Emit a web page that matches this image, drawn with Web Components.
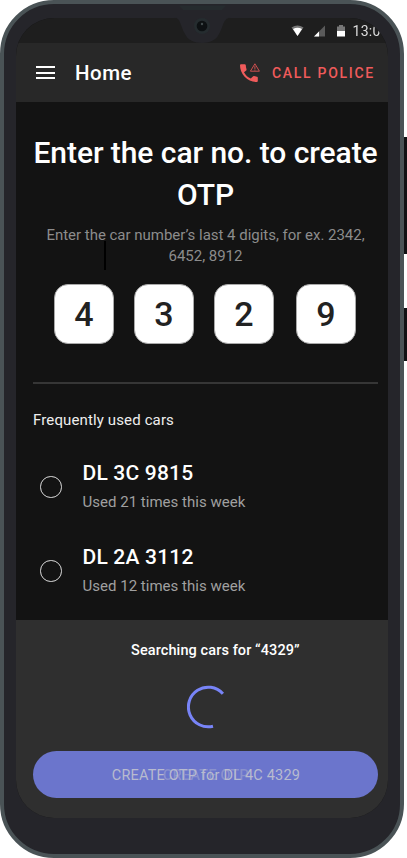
<!DOCTYPE html>
<html lang="en">
<head>
<meta charset="utf-8">
<title>Home</title>
<style>
html,body{margin:0;background:#fff;overflow:hidden}
body{width:407px;height:858px;font-family:Roboto,"Liberation Sans",sans-serif;color:#fff}
</style>
</head>
<body>
<phone-frame>
  <status-bar slot="status">13:00</status-bar>
  <app-bar>Home<span slot="action">CALL POLICE</span></app-bar>
  <otp-form>
    <span slot="title">Enter the car no. to create OTP</span>
    <span slot="hint">Enter the car number’s last 4 digits, for ex. 2342, 6452, 8912</span>
    <digit-box>4</digit-box><digit-box>3</digit-box><digit-box>2</digit-box><digit-box style="margin-left:2px">9</digit-box>
  </otp-form>
  <car-list>
    <span slot="heading">Frequently used cars</span>
    <car-option>DL 3C 9815<span slot="usage">Used 21 times this week</span></car-option>
    <car-option>DL 2A 3112<span slot="usage">Used 12 times this week</span></car-option>
  </car-list>
  <search-sheet>Searching cars for “4329”
    <create-button slot="button">CREATE OTP for DL 4C 4329<span slot="ghost">CREATE OTP</span></create-button>
  </search-sheet>
</phone-frame>
<script>
function define(name, css, html) {
  const t = document.createElement('template');
  t.innerHTML = `<style>:host,*{box-sizing:border-box}${css}</style>${html}`;
  customElements.define(name, class extends HTMLElement {
    constructor() {
      super();
      this.attachShadow({mode: 'open'}).append(t.content.cloneNode(true));
    }
  });
}

define('phone-frame', `
:host{display:block;position:relative;width:407px;height:858px}
.key{position:absolute;left:400px;width:7px;background:#111214}
.body{position:relative;width:404px;height:858px}
.case{width:404px;height:858px;border:4px solid #4a5356;border-radius:54px;background:#25252a;padding:14px 12px 36px}
.screen{width:372px;height:800px;border-radius:38px;overflow:hidden;background:#131313;display:flex;flex-direction:column}
.notch{position:absolute;left:0;top:0}
`, `
<div class="key" style="top:137px;height:117px"></div>
<div class="key" style="top:308px;height:53px"></div>
<div class="body"><div class="case"><div class="screen"><slot name="status"></slot><slot></slot></div></div>
<svg class="notch" width="404" height="50" viewBox="0 0 404 50">
<path d="M174 17C181 18 180 26 185 34C190 46 214 46 219 34C224 26 222 19 231 17Z" fill="#25252a"/>
<path d="M179 5.500H226L222 10H183Z" fill="#252b2e"/>
<circle cx="202" cy="26" r="8" fill="#252c2f"/><circle cx="202" cy="26" r="5.300" fill="#0d1113"/><circle cx="202" cy="24" r="1.200" fill="#424b4d"/>
</svg></div>`);

define('status-bar', `
:host{display:flex;height:25px;flex:none;background:#1e1e1e;color:#ddd;font-size:14px;line-height:26px;justify-content:flex-end;white-space:nowrap}
.clip{width:35.500px;overflow:hidden;letter-spacing:.3px;-webkit-mask-image:linear-gradient(90deg,#000 78%,transparent 96%)}
svg{display:block;flex:none;margin-right:8px}
`, `
<svg width="54" height="25" viewBox="0 0 54 25">
<path d="M.5 9.500Q6.500 5.500 12.500 9.500L6.500 18Z" fill="#777"/><path d="M2 11Q6.500 8.500 11 11L6.500 18Z" fill="#fff"/>
<path d="M23 18.500H34V7.500Z" fill="#5b5b5b"/><path d="M23 18.500H28V13.500Z" fill="#fff"/>
<path d="M46 8.500H48V7H52V8.500H54V13H46Z" fill="#777"/><path d="M46 13H54V18.500H46Z" fill="#fff"/>
</svg><div class="clip"><slot></slot></div>`);

define('app-bar', `
:host{display:flex;flex:none;align-items:center;height:59px;background:#282828;padding:0 13px 0 20px;font-size:20.500px;font-weight:500;letter-spacing:.5px}
.menu{width:19px;height:13px;display:flex;flex-direction:column;justify-content:space-between;margin-right:20px}
.menu i{height:2px;background:#fff}
.action{display:flex;align-items:center;margin-left:auto;color:#f05b5b;font-size:14px;letter-spacing:1.720px}
svg{margin-right:11px;display:block}
`, `
<div class="menu"><i></i><i></i><i></i></div><slot></slot>
<div class="action"><svg width="21" height="20" viewBox="0 0 21 20"><path d="M0 2.300Q0 1.300 1 1.300H4.700Q5.700 1.300 5.800 2.300Q5.900 4.400 6.500 6.300Q6.700 7 6.200 7.500L4 9.300Q6.500 14 10.800 15.600L12.900 13.400Q13.400 12.900 14.100 13.100L17 13.700Q17.800 13.900 17.800 14.700V18Q17.800 19 16.700 19Q9.500 18.700 4.600 13.700Q0 8.800 0 2.300Z" fill="#f05b5b"/><path d="M14.900.8L19.400 8.200H10.400Z" fill="none" stroke="#cf5050" stroke-width="1"/><path d="M14.900 3.200V5.900M14.900 6.500V7.500" stroke="#cf5050" stroke-width="1"/></svg><slot name="action"></slot></div>`);

define('otp-form', `
:host{display:block;flex:none;height:282px;margin:0 10px 0 17px;border-bottom:2px solid #363636;text-align:center;position:relative}
h1{margin:0 -20px;padding-top:30px;font-size:30px;line-height:42px;font-weight:500;letter-spacing:-.06px}
h1 slot{display:block;width:370px;margin:auto}
p{margin:9px auto 0;width:335px;font-size:15px;line-height:21px;color:#8c8c8c;letter-spacing:-.02px}
.boxes{display:flex;gap:20px;justify-content:center;margin:17px 1px 0 0}
.caret{position:absolute;left:71px;top:139px;width:2px;height:29px;background:#000}
`, `<h1><slot name="title"></slot></h1><p><slot name="hint"></slot></p><div class="boxes"><slot></slot></div><i class="caret"></i>`);

define('digit-box', `
:host{display:flex;width:60px;height:60px;background:#fff;border:1px solid #a9a9a9;border-radius:14px;align-items:center;justify-content:center;color:#222;font-size:34px;font-weight:500;padding-bottom:1px}
`, `<slot></slot>`);

define('car-list', `
:host{display:block;flex:1;padding:27px 17px 0}
h2{margin:0 0 22px;font-size:15px;line-height:19px;font-weight:400;letter-spacing:.13px;color:#eee}
`, `<h2><slot name="heading"></slot></h2><slot></slot>`);

define('car-option', `
:host{display:flex;height:84px;padding:6px 0 0 7px}
.radio{width:21.500px;height:21.500px;border:1.400px solid #ddd;border-radius:50%;margin:18px 21px 0 0}
.name{font-size:21px;line-height:30px;font-weight:500;letter-spacing:.2px}
.usage{font-size:15px;line-height:21px;margin-top:4px;color:#a0a0a0;letter-spacing:.02px}
`, `<i class="radio"></i><div><div class="name"><slot></slot></div><div class="usage"><slot name="usage"></slot></div></div>`);

define('search-sheet', `
:host{display:flex;flex-direction:column;flex:none;height:199px;background:#2f2f2f;padding:20px 10px 0 17px}
.label{align-self:flex-start;margin-left:98px;font-size:14.500px;line-height:22px;font-weight:500;letter-spacing:.1px;white-space:nowrap}
svg{display:block;margin:23px 0 0 154px}
`, `<div class="label"><slot></slot></div>
<svg width="44" height="44" viewBox="0 0 44 44"><path d="M35.900 8.700A19.800 19.800 0 1 0 26 41.200" fill="none" stroke="#7884f7" stroke-width="3"/></svg><slot name="button"></slot>`);

define('create-button', `
:host{display:grid;place-items:center;height:47px;margin-top:22px;border-radius:24px;background:#6b75cc;color:#b8bbcf;font-size:14.500px;font-weight:400;letter-spacing:.2px}
div{grid-area:1/1;padding:2px 0 0 1px;white-space:nowrap}
.ghost{opacity:.4;font-weight:500}
`, `<div class="ghost"><slot name="ghost"></slot></div><div><slot></slot></div>`);
</script>
</body>
</html>
